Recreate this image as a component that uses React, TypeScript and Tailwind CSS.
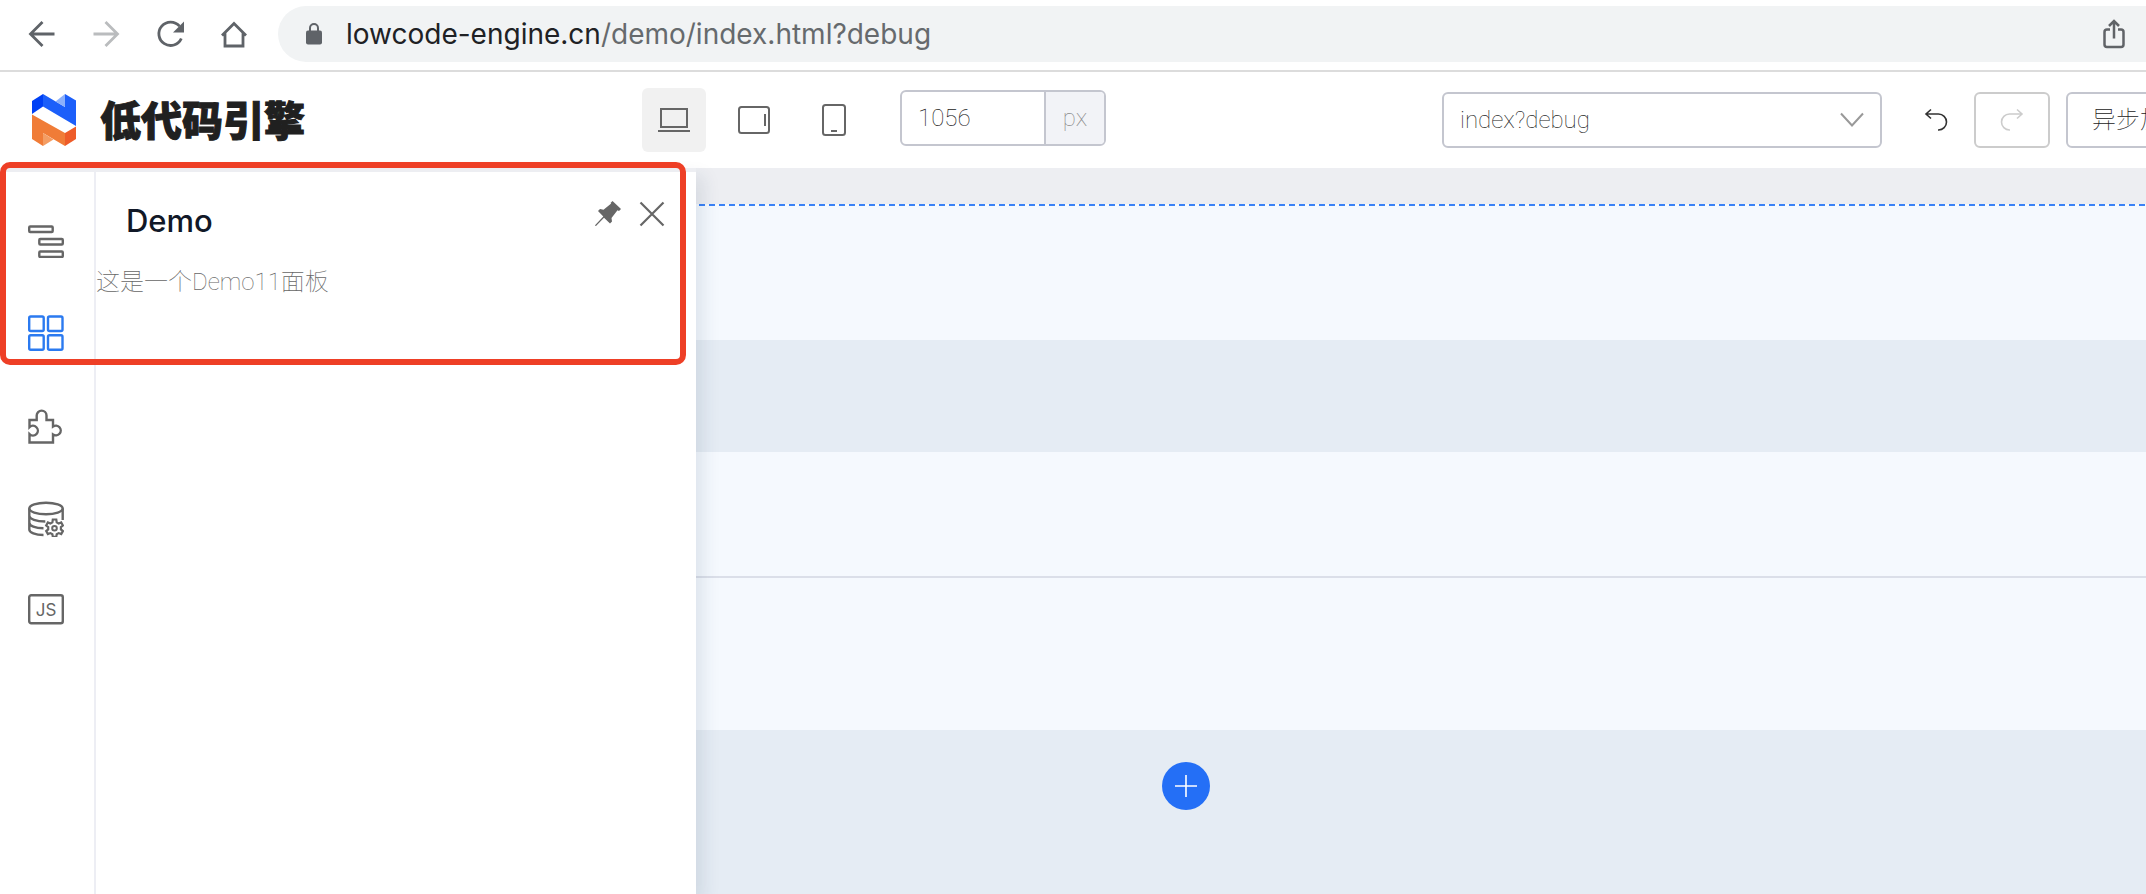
import React from "react";

const thin = "font-['Roboto','Noto_Sans_CJK_SC',sans-serif] font-thin";

function BrowserBar() {
  return (
    <header className="flex h-[72px] items-center border-b-2 border-[#dcdcdc] bg-white pb-0.5">
      <nav className="flex items-center gap-8 pl-[26px] text-[#5f6368]" aria-label="Browser">
        <button aria-label="Back">
          <svg className="size-8" viewBox="0 0 32 32" fill="none" stroke="currentColor" strokeWidth="2.8">
            <path d="M28.5 16H4.5M16.5 4 4.5 16l12 12" />
          </svg>
        </button>
        <button aria-label="Forward" className="text-[#babcbe]">
          <svg className="size-8" viewBox="0 0 32 32" fill="none" stroke="currentColor" strokeWidth="2.8">
            <path d="M3.5 16h24M15.5 4l12 12-12 12" />
          </svg>
        </button>
        <button aria-label="Reload">
          <svg className="size-8" viewBox="0 0 32 32" fill="none">
            <path d="M25.5 8.2A11.7 11.7 0 1 0 27.3 20.5" stroke="currentColor" strokeWidth="2.8" />
            <path d="M30 3.5v11H19z" fill="currentColor" />
          </svg>
        </button>
        <button aria-label="Home">
          <svg className="size-8" viewBox="0 0 32 32" fill="none" stroke="currentColor" strokeWidth="2.8">
            <path d="M4 17.5 16 5.5l12 12M7 15v13h18V15" />
          </svg>
        </button>
      </nav>
      <div className="ml-7 flex h-14 flex-1 items-center rounded-l-full bg-[#f1f3f4] pr-4">
        <svg className="ml-7 h-[22px] w-4" viewBox="0 0 16 22" fill="none">
          <rect y="7.5" width="16" height="14" rx="2" fill="#5f6368" />
          <path d="M4 8V5a4 4 0 0 1 8 0v3" stroke="#5f6368" strokeWidth="2" />
        </svg>
        <p className="ml-6 font-['Inter',sans-serif] text-[28px] leading-8 text-[#666a6d]">
          <span className="text-[#202124]">lowcode-engine.cn</span>/demo/index.html?debug
        </p>
        <button aria-label="Share" className="ml-auto text-[#606367]">
          <svg className="size-8" viewBox="0 0 32 32" fill="none" stroke="currentColor" strokeWidth="2.5">
            <path d="M12 11.5H9A2.5 2.5 0 0 0 6.5 14v12.5A2.5 2.5 0 0 0 9 29h14a2.5 2.5 0 0 0 2.5-2.5V14a2.5 2.5 0 0 0-2.5-2.5h-3M16 20.5V3M11 8l5-5 5 5" />
          </svg>
        </button>
      </div>
    </header>
  );
}

function Logo() {
  return (
    <a href="#" className="flex items-center gap-6">
      <svg className="h-[52px] w-11" viewBox="0 0 44 52">
        <path d="M0 7 11 0v12.5L0 20z" fill="#0040f5" />
        <path d="m11 0 22 13 11-6.5V32L11 12.5z" fill="#1c5ffa" />
        <path d="M33 0v13l-9.5-5.5z" fill="#8cb0fb" />
        <path d="m33 0 11 6.5V20L33 13z" fill="#1c5ffa" />
        <path d="M0 20.5 33 39v13L11 39v13L0 45z" fill="#f07c37" />
        <path d="M11 39v13l10.500-6.500z" fill="#f49d63" />
        <path d="m33 39 11-6.500V45l-11 7z" fill="#ee5c29" />
      </svg>
      <span className="pb-1 font-['Noto_Sans_CJK_SC',sans-serif] text-[41px] leading-[52px] font-black text-[#202020] [-webkit-text-stroke:1px_#202020]">低代码引擎</span>
    </a>
  );
}

function Devices() {
  return (
    <div className="flex items-center gap-4 text-[#666]">
      <button aria-label="Desktop" className="flex size-16 items-center justify-center rounded-md bg-[#f1f1f1]">
        <svg className="size-8" viewBox="0 0 32 32" fill="none" stroke="currentColor" strokeWidth="2">
          <path d="M3 5h26v18H3zM0 27h32" />
        </svg>
      </button>
      <button aria-label="Tablet" className="flex size-16 items-center justify-center">
        <svg className="size-8" viewBox="0 0 32 32" fill="none" stroke="currentColor" strokeWidth="2">
          <rect x="1" y="3" width="30" height="26" rx="2.5" />
          <path d="M27 10v12" />
        </svg>
      </button>
      <button aria-label="Phone" className="flex size-16 items-center justify-center">
        <svg className="size-8" viewBox="0 0 32 32" fill="none" stroke="currentColor" strokeWidth="2">
          <rect x="5" y="1" width="22" height="30" rx="2.5" />
          <path d="M13 27h6" />
        </svg>
      </button>
    </div>
  );
}

function Toolbar() {
  return (
    <div className="flex h-24 items-center overflow-hidden bg-white pl-8">
      <div className="flex flex-1 items-center">
        <div className="w-[610px] shrink-0">
          <Logo />
        </div>
        <Devices />
        <label className={`mb-1 ml-[34px] flex h-14 w-[206px] shrink-0 overflow-hidden rounded-md border-2 border-[#c4c6cf] text-2xl ${thin}`}>
          <input aria-label="Canvas width" defaultValue="1056" className="w-0 flex-1 px-4 text-[#222] outline-none" />
          <span className="flex w-[60px] items-center justify-center border-l-2 border-[#c4c6cf] bg-[#f2f3f7] text-[#888]">px</span>
        </label>
      </div>
      <div className="flex w-[704px] shrink-0 items-center">
        <div className="relative h-14 w-[440px] shrink-0">
          <select aria-label="Page" className={`size-full appearance-none rounded-md border-2 border-[#c4c6cf] bg-white px-4 text-2xl text-[#222] ${thin}`}>
            <option>index?debug</option>
          </select>
          <svg className="pointer-events-none absolute top-5 right-[18px] h-4 w-6" viewBox="0 0 24 16" fill="none" stroke="#999" strokeWidth="2">
            <path d="m1 1.5 11 12 11-12" />
          </svg>
        </div>
        <button aria-label="Undo" className="ml-4 flex h-14 w-[76px] shrink-0 items-center justify-center text-[#333]">
          <svg className="size-6" viewBox="0 0 24 24" fill="none" stroke="currentColor" strokeWidth="1.6">
            <path d="M2 6h12.500a8 8 0 0 1 0 16H14M7 1.500 2 6l5 4.500" />
          </svg>
        </button>
        <button aria-label="Redo" disabled className="flex h-14 w-[76px] shrink-0 items-center justify-center rounded-md border-2 border-[#ccc] text-[#ccc]">
          <svg className="size-6" viewBox="0 0 24 24" fill="none" stroke="currentColor" strokeWidth="1.6">
            <path d="M22 6H9.500a8 8 0 0 0 0 16h.5M17 1.500 22 6l-5 4.500" />
          </svg>
        </button>
        <button className={`ml-4 h-14 shrink-0 rounded-md border-2 border-[#c4c6cf] px-6 text-2xl whitespace-nowrap text-[#222] ${thin}`}>异步加载</button>
      </div>
    </div>
  );
}

function Sidebar() {
  return (
    <nav aria-label="Panels" className="flex w-24 shrink-0 flex-col items-center border-r-2 border-[#edeef4] bg-white pt-[50px] pr-0.5 text-[#666]">
      <button aria-label="Outline" className="flex h-[93px] w-full items-start justify-center">
        <svg className="size-9" viewBox="0 0 36 36" fill="none" stroke="currentColor" strokeWidth="2.4">
          <rect x="1.2" y="4.5" width="23.5" height="5.5" rx="1" />
          <rect x="11.3" y="17" width="23.5" height="5.5" rx="1" />
          <rect x="11.3" y="29.5" width="23.5" height="5.5" rx="1" />
        </svg>
      </button>
      <button aria-label="Components" className="flex h-[93px] w-full items-start justify-center text-[#2b7af0]">
        <svg className="size-9" viewBox="0 0 36 36" fill="none" stroke="currentColor" strokeWidth="2.4">
          <rect x="1.2" y="1.5" width="14.5" height="14.5" rx="1.5" />
          <rect x="20" y="1.5" width="14.5" height="14.5" rx="1.5" />
          <rect x="1.2" y="20.2" width="14.5" height="14.5" rx="1.5" />
          <rect x="20" y="20.2" width="14.5" height="14.5" rx="1.5" />
        </svg>
      </button>
      <button aria-label="Plugins" className="flex h-[93px] w-full items-start justify-center">
        <svg className="size-9" viewBox="0 0 36 36" fill="none" stroke="currentColor" strokeWidth="2.4">
          <path d="M1.500 12h7.200V7.500a4.900 4.900 0 0 1 9.800 0V12h6.500v6.500a4.900 4.900 0 1 1 0 8V34.500H1.500v-8.300a4.900 4.900 0 1 0 0-7z" />
        </svg>
      </button>
      <button aria-label="Data sources" className="flex h-[93px] w-full items-start justify-center">
        <svg className="size-9" viewBox="0 0 36 36" fill="none" stroke="currentColor" strokeWidth="2.4">
          <ellipse cx="18" cy="7.500" rx="16.700" ry="5.700" />
          <path d="M1.300 7.500v21c0 3 6 5.500 14.200 5.500M34.700 7.500V19M1.300 14.500c0 3.500 7 6 16 6M1.300 21.500c0 3.500 6 5.800 14.200 5.800" />
          <path d="m24.800 18.500-.4 2.800-2 1.200-2.500-1-1.700 3 2 1.600v2.300l-2 1.700 1.700 3 2.500-1 2 1.100.4 2.600h3.500l.4-2.600 2-1.100 2.500 1 1.700-3-2-1.700v-2.300l2-1.600-1.700-3-2.500 1-2-1.200-.4-2.800z" strokeWidth="2.200" />
          <circle cx="26.500" cy="27.200" r="2.300" strokeWidth="2" />
        </svg>
      </button>
      <button aria-label="Source code" className="flex h-[93px] w-full items-start justify-center">
        <svg className="size-9" viewBox="0 0 36 36" fill="none">
          <rect x="1.2" y="1.2" width="33.6" height="28" rx="2" stroke="currentColor" strokeWidth="2.4" />
          <text x="18" y="21.500" textAnchor="middle" fill="currentColor" className="font-['Inter',sans-serif] text-[17px]">JS</text>
        </svg>
      </button>
    </nav>
  );
}

function DemoPanel() {
  return (
    <section className="w-[600px] bg-white">
      <div className="flex items-start px-[30px] pt-7 text-[#666]">
        <h2 className="font-['Inter',sans-serif] text-[31px] leading-[42px] font-medium text-[#111827]">Demo</h2>
        <button aria-label="Pin" className="ml-auto">
          <svg className="size-7" viewBox="0 0 28 28" fill="currentColor">
            <path d="m18.500 1 8.500 8-2 2-1.500-.7-6 7.700.5 3.500-2 2-6-5.800L2 26l-1-.2.500-1 7.800-8.300L4 11l2-2 3.500.7 7.700-6.200L16.500 3z" />
          </svg>
        </button>
        <button aria-label="Close" className="ml-4">
          <svg className="size-7" viewBox="0 0 28 28" fill="none" stroke="currentColor" strokeWidth="2.2">
            <path d="m2.500 2.500 23 23M25.500 2.500l-23 23" />
          </svg>
        </button>
      </div>
      <p className={`mt-6 text-2xl leading-8 text-[#666] ${thin}`}>这是一个Demo11面板</p>
    </section>
  );
}

function Canvas() {
  return (
    <main className="flex min-w-0 flex-1 flex-col bg-[#f5f9fe]">
      <div className="h-9 bg-[#edeef2]" />
      <svg className="h-0.5 w-full shrink-0" aria-hidden="true">
        <line x1="3" y1="1" x2="100%" y2="1" stroke="#3b82f6" strokeWidth="2" strokeDasharray="6 4" />
      </svg>
      <div className="h-[134px]" />
      <div className="h-28 bg-[#e5ecf4]" />
      <div className="h-[126px] border-b-2 border-[#dbdfe9]" />
      <div className="h-38" />
      <div className="flex flex-1 justify-center bg-[#e5ecf4] pt-8">
        <button aria-label="Add" className="mr-[470px] flex size-12 items-center justify-center rounded-full bg-[#246ff6]">
          <svg className="size-6" viewBox="0 0 24 24" stroke="#fff" strokeWidth="1.6">
            <path d="M12 1v22M1 12h22" />
          </svg>
        </button>
      </div>
    </main>
  );
}

export default function App() {
  return (
    <div className="flex h-screen flex-col overflow-hidden bg-white">
      <BrowserBar />
      <Toolbar />
      <div className="relative flex flex-1">
        <div className="z-10 flex shrink-0 border-t-4 border-[#edeef2] shadow-[8px_8px_16px_rgba(31,56,88,0.1)]">
          <Sidebar />
          <DemoPanel />
        </div>
        <Canvas />
        <div className="pointer-events-none absolute -top-1.5 left-0 z-20 h-[203px] w-[686px] rounded-[10px] border-6 border-[#ee3f26]" />
      </div>
    </div>
  );
}
